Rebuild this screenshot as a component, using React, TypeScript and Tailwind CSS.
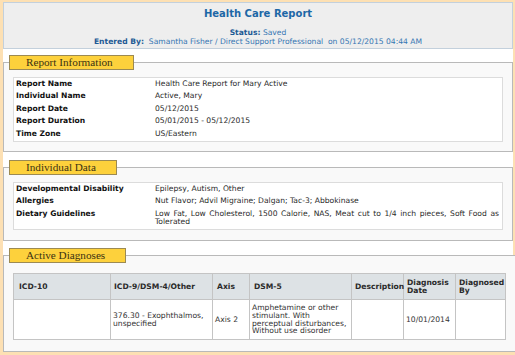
import React from 'react';

const font = "font-['DejaVu_Sans',Verdana,sans-serif]";

interface Row {
  label: string;
  value: string;
}

const reportInfo: Row[] = [
  { label: 'Report Name', value: 'Health Care Report for Mary Active' },
  { label: 'Individual Name', value: 'Active, Mary' },
  { label: 'Report Date', value: '05/12/2015' },
  { label: 'Report Duration', value: '05/01/2015 - 05/12/2015' },
  { label: 'Time Zone', value: 'US/Eastern' },
];

const individualData: Row[] = [
  { label: 'Developmental Disability', value: 'Epilepsy, Autism, Other' },
  { label: 'Allergies', value: 'Nut Flavor; Advil Migraine; Dalgan; Tac-3; Abbokinase' },
  {
    label: 'Dietary Guidelines',
    value: 'Low Fat, Low Cholesterol, 1500 Calorie, NAS, Meat cut to 1/4 inch pieces, Soft Food as Tolerated',
  },
];

const Section: React.FC<{ title: string; pt: string; pb: string; mt: string; children: React.ReactNode }> = ({
  title,
  pt,
  pb,
  mt,
  children,
}) => (
  <fieldset className={`${mt} border border-[#b9b9b9] bg-[#f9f9f9] px-[9px] ${pb}`}>
    <legend className="ml-[-4px] border border-[#9c8a52] bg-[#fdd13c] pl-[16px] pr-[20px] font-['Liberation_Serif',serif] text-[11.2px] leading-[13px] text-[#3b3212]">
      {title}
    </legend>
    <div className={pt}>{children}</div>
  </fieldset>
);

const InfoTable: React.FC<{ rows: Row[] }> = ({ rows }) => (
  <div className="border border-[#dcdcdc] bg-white">
    <table className="w-full table-fixed border-collapse">
      <colgroup>
        <col className="w-[141px]" />
        <col />
      </colgroup>
      <tbody>
        {rows.map((r) => (
          <tr key={r.label}>
            <td className="py-[2px] pl-[2px] align-top font-bold text-[#111]">{r.label}</td>
            <td className="py-[2px] pr-[3px] text-justify align-top text-[#2a2a2a]">{r.value}</td>
          </tr>
        ))}
      </tbody>
    </table>
  </div>
);

const cols = [
  { h: 'ICD-10', w: 'w-[97px]', pl: 'pl-[5px]' },
  { h: 'ICD-9/DSM-4/Other', w: 'w-[102px]', pl: 'pl-[3px]' },
  { h: 'Axis', w: 'w-[37px]', pl: 'pl-[4px]' },
  { h: 'DSM-5', w: 'w-[102px]', pl: 'pl-[4px]' },
  { h: 'Description', w: 'w-[52px]', pl: 'pl-[3px]' },
  { h: 'Diagnosis Date', w: 'w-[52px]', pl: 'pl-[3px]' },
  { h: 'Diagnosed By', w: 'w-[50px]', pl: 'pl-[3px]' },
];

const diagnosis = [
  '',
  '376.30 - Exophthalmos, unspecified',
  'Axis 2',
  'Amphetamine or other stimulant. With perceptual disturbances, Without use disorder',
  '',
  '10/01/2014',
  '',
];

export default function App() {
  return (
    <div className={`h-[355px] w-[515px] bg-[#fde0b3] pl-[3px] pr-[2px] pt-[2px] ${font} text-[7.6px] leading-[8.6px]`}>
      <div className="flex h-[350px] flex-col bg-white">
        <div className="flex h-[47px] flex-col items-center border border-[#c3d0dc] bg-[#eeeeee] pt-[4px]">
          <div className="text-[10px] font-bold leading-[14px] text-[#1d67a6]">Health Care Report</div>
          <div className="mt-[7px] leading-[9px] text-[#3576b3]">
            <span className="font-bold text-[#1d5a95]">Status:</span> Saved
          </div>
          <div className="whitespace-pre leading-[9px] text-[#3576b3]">
            <span className="font-bold text-[#1d5a95]">Entered By:</span>
            {'  Samantha Fisher / Direct Support Professional  on 05/12/2015 04:44 AM'}
          </div>
        </div>

        <Section title="Report Information" mt="mt-[6px]" pt="pt-[7px]" pb="pb-[9px]">
          <InfoTable rows={reportInfo} />
        </Section>

        <Section title="Individual Data" mt="mt-[8px]" pt="pt-[7px]" pb="pb-[10px]">
          <InfoTable rows={individualData} />
        </Section>

        <Section title="Active Diagnoses" mt="mt-[7px]" pt="pt-[10px]" pb="pb-[11px]">
          <table className="w-full table-fixed border-collapse border border-[#bdbdbd]">
            <colgroup>
              {cols.map((c) => (
                <col key={c.h} className={c.w} />
              ))}
            </colgroup>
            <thead>
              <tr className="h-[26px] bg-[#dde2e5]">
                {cols.map((c) => (
                  <th key={c.h} className={`border border-[#c4c4c4] ${c.pl} pr-[2px] text-left align-middle font-bold leading-[7.5px] text-[#2a2a2a]`}>
                    {c.h}
                  </th>
                ))}
              </tr>
            </thead>
            <tbody>
              <tr className="h-[40px] bg-white">
                {diagnosis.map((d, i) => (
                  <td key={i} className="border border-[#c4c4c4] pl-[2px] pr-[1px] align-middle leading-[7.7px] text-[#333]">
                    {d}
                  </td>
                ))}
              </tr>
            </tbody>
          </table>
        </Section>
      </div>
    </div>
  );
}
